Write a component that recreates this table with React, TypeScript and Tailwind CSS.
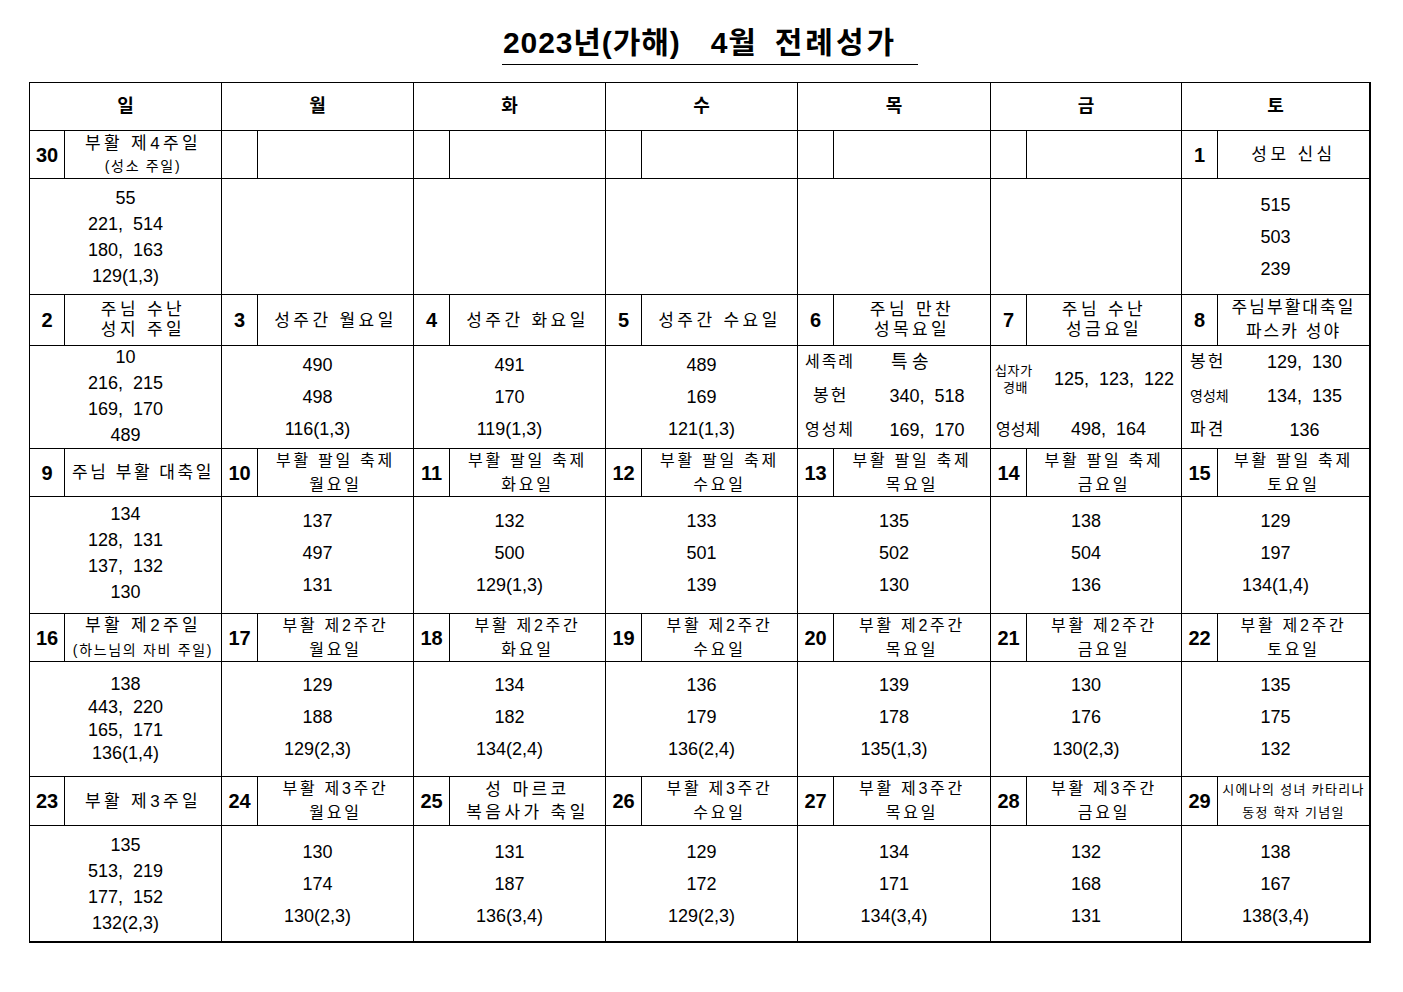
import React from "react"

const font = { fontFamily: "'Liberation Sans', 'Noto Sans CJK KR', sans-serif" }

type Head = { n?: string; lines?: string[]; small?: boolean; lh?: string; size?: string }

const cell = "border-r border-b border-black"

function DayHead({ h, last }: { h: Head; last?: boolean }) {
  return (
    <>
      <div className={`${cell} flex items-center justify-center text-[20px] font-bold`}>{h.n}</div>
      <div
        className={`${cell} ${last ? "border-r-2" : ""} flex flex-col items-center justify-center whitespace-nowrap text-center ${h.size ?? "text-[17px] tracking-[0.2em]"} ${h.lh ?? "leading-[23px]"}`}
      >
        {h.lines?.map((l, i) => (
          <span key={i} className={h.small && i === 1 ? "text-[14px] tracking-[0.12em]" : ""}>
            {l}
          </span>
        ))}
      </div>
    </>
  )
}

function Body({ lines, lh, last, extra }: { lines: string[]; lh: string; last?: boolean; extra?: string }) {
  return (
    <div
      className={`${cell} ${last ? "border-r-2" : ""} col-span-2 flex flex-col items-center justify-center whitespace-pre text-[18px] ${lh} ${extra ?? ""}`}
    >
      {lines.map((l, i) => (
        <span key={i}>{l}</span>
      ))}
    </div>
  )
}

const days = ["일", "월", "화", "수", "목", "금", "토"]
const sub = "text-[16px] tracking-[0.17em]"

export default function App() {
  return (
    <div className="min-h-[992px] w-[1403px] bg-white text-black" style={font}>
      <div className="ml-[502px] mt-[24px] flex h-[41px] w-[416px] items-center border-b border-black pb-[2px] pl-[1px] text-[30px] font-bold leading-[38px] whitespace-nowrap">
        <span className="tracking-[0.03em]">2023년(가해)</span>
        <span className="ml-[30px] tracking-[0.03em]">4월</span>
        <span className="ml-[18px] tracking-[0.1em]">전례성가</span>
      </div>

      <div className="ml-[29px] mt-[17px] grid w-[1342px] grid-cols-[35px_157px_36px_156px_36px_156px_36px_156px_36px_157px_36px_155px_36px_153px] grid-rows-[48px_48px_116px_51px_103px_48px_117px_48px_115px_49px_117px] border-l border-t border-black">
        {/* weekday header */}
        {days.map((d, i) => (
          <div
            key={d}
            className={`${cell} ${i === 6 ? "border-r-2" : ""} col-span-2 flex items-center justify-center text-[18px] font-bold`}
          >
            {d}
          </div>
        ))}

        {/* week 1 */}
        <DayHead h={{ n: "30", lines: ["부활 제4주일", "(성소 주일)"], small: true, lh: "leading-[23px]" }} />
        <DayHead h={{}} />
        <DayHead h={{}} />
        <DayHead h={{}} />
        <DayHead h={{}} />
        <DayHead h={{}} />
        <DayHead h={{ n: "1", lines: ["성모 신심"] }} last />

        <Body lines={["55", "221,  514", "180,  163", "129(1,3)"]} lh="leading-[26px]" />
        <Body lines={[]} lh="" />
        <Body lines={[]} lh="" />
        <Body lines={[]} lh="" />
        <Body lines={[]} lh="" />
        <Body lines={[]} lh="" />
        <Body lines={["515", "503", "239"]} lh="leading-[32px]" last />

        {/* week 2 */}
        <DayHead h={{ n: "2", lines: ["주님 수난", "성지 주일"], lh: "leading-[20px]" }} />
        <DayHead h={{ n: "3", lines: ["성주간 월요일"] }} />
        <DayHead h={{ n: "4", lines: ["성주간 화요일"] }} />
        <DayHead h={{ n: "5", lines: ["성주간 수요일"] }} />
        <DayHead h={{ n: "6", lines: ["주님 만찬", "성목요일"], lh: "leading-[20px]" }} />
        <DayHead h={{ n: "7", lines: ["주님 수난", "성금요일"], lh: "leading-[20px]" }} />
        <DayHead h={{ n: "8", lines: ["주님부활대축일", "파스카 성야"], lh: "leading-[24px]", size: "text-[17px] tracking-[0.12em]" }} last />

        <Body lines={["10", "216,  215", "169,  170", "489"]} lh="leading-[26px]" extra="pb-[3px]" />
        <Body lines={["490", "498", "116(1,3)"]} lh="leading-[32px]" />
        <Body lines={["491", "170", "119(1,3)"]} lh="leading-[32px]" />
        <Body lines={["489", "169", "121(1,3)"]} lh="leading-[32px]" />
        <div className={`${cell} col-span-2 flex flex-col justify-center whitespace-pre pb-[2px] text-[18px] leading-[34px]`}>
          <div className="flex items-center">
            <span className="w-[66px] pl-[7px] text-[16px] tracking-[0.12em]">세족례</span>
            <span className="w-[126px] pr-[30px] text-center tracking-[0.25em]">특송</span>
          </div>
          <div className="flex items-center">
            <span className="w-[66px] pl-[15px] text-[17px] tracking-[0.12em]">봉헌</span>
            <span className="w-[126px] text-center">340,  518</span>
          </div>
          <div className="flex items-center">
            <span className="w-[66px] pl-[7px] text-[16px] tracking-[0.12em]">영성체</span>
            <span className="w-[126px] text-center">169,  170</span>
          </div>
        </div>
        <div className={`${cell} col-span-2 flex flex-col whitespace-pre text-[18px]`}>
          <div className="flex h-[66px] items-center">
            <span className="w-[52px] pl-[4px] text-[13px] leading-[17px] tracking-[0.05em]">
              십자가
              <br />
              <span className="pl-[8px]">경배</span>
            </span>
            <span className="pl-[11px]">125,  123,  122</span>
          </div>
          <div className="flex flex-1 items-center pb-[1px]">
            <span className="w-[52px] pl-[5px] text-[16px]">영성체</span>
            <span className="pl-[28px]">498,  164</span>
          </div>
        </div>
        <div className={`${cell} col-span-2 flex flex-col justify-center whitespace-pre border-r-2 pb-[2px] text-[18px] leading-[34px]`}>
          <div className="flex items-center">
            <span className="w-[72px] pl-[8px] text-[17px] tracking-[0.12em]">봉헌</span>
            <span className="w-[101px] text-center">129,  130</span>
          </div>
          <div className="flex items-center">
            <span className="w-[72px] pl-[8px] text-[14px]">영성체</span>
            <span className="w-[101px] text-center">134,  135</span>
          </div>
          <div className="flex items-center">
            <span className="w-[72px] pl-[8px] text-[17px] tracking-[0.12em]">파견</span>
            <span className="w-[101px] text-center">136</span>
          </div>
        </div>

        {/* week 3 */}
        <DayHead h={{ n: "9", lines: ["주님 부활 대축일"], size: "text-[17px] tracking-[0.15em]" }} />
        <DayHead h={{ n: "10", lines: ["부활 팔일 축제", "월요일"], size: sub, lh: "leading-[24px]" }} />
        <DayHead h={{ n: "11", lines: ["부활 팔일 축제", "화요일"], size: sub, lh: "leading-[24px]" }} />
        <DayHead h={{ n: "12", lines: ["부활 팔일 축제", "수요일"], size: sub, lh: "leading-[24px]" }} />
        <DayHead h={{ n: "13", lines: ["부활 팔일 축제", "목요일"], size: sub, lh: "leading-[24px]" }} />
        <DayHead h={{ n: "14", lines: ["부활 팔일 축제", "금요일"], size: sub, lh: "leading-[24px]" }} />
        <DayHead h={{ n: "15", lines: ["부활 팔일 축제", "토요일"], size: sub, lh: "leading-[24px]" }} last />

        <Body lines={["134", "128,  131", "137,  132", "130"]} lh="leading-[26px]" extra="pb-[5px]" />
        <Body lines={["137", "497", "131"]} lh="leading-[32px]" extra="pb-[5px]" />
        <Body lines={["132", "500", "129(1,3)"]} lh="leading-[32px]" extra="pb-[5px]" />
        <Body lines={["133", "501", "139"]} lh="leading-[32px]" extra="pb-[5px]" />
        <Body lines={["135", "502", "130"]} lh="leading-[32px]" extra="pb-[5px]" />
        <Body lines={["138", "504", "136"]} lh="leading-[32px]" extra="pb-[5px]" />
        <Body lines={["129", "197", "134(1,4)"]} lh="leading-[32px]" extra="pb-[5px]" last />

        {/* week 4 */}
        <DayHead h={{ n: "16", lines: ["부활 제2주일", "(하느님의 자비 주일)"], small: true, lh: "leading-[24px]" }} />
        <DayHead h={{ n: "17", lines: ["부활 제2주간", "월요일"], size: sub, lh: "leading-[24px]" }} />
        <DayHead h={{ n: "18", lines: ["부활 제2주간", "화요일"], size: sub, lh: "leading-[24px]" }} />
        <DayHead h={{ n: "19", lines: ["부활 제2주간", "수요일"], size: sub, lh: "leading-[24px]" }} />
        <DayHead h={{ n: "20", lines: ["부활 제2주간", "목요일"], size: sub, lh: "leading-[24px]" }} />
        <DayHead h={{ n: "21", lines: ["부활 제2주간", "금요일"], size: sub, lh: "leading-[24px]" }} />
        <DayHead h={{ n: "22", lines: ["부활 제2주간", "토요일"], size: sub, lh: "leading-[24px]" }} last />

        <Body lines={["138", "443,  220", "165,  171", "136(1,4)"]} lh="leading-[23px]" />
        <Body lines={["129", "188", "129(2,3)"]} lh="leading-[32px]" extra="pb-[4px]" />
        <Body lines={["134", "182", "134(2,4)"]} lh="leading-[32px]" extra="pb-[4px]" />
        <Body lines={["136", "179", "136(2,4)"]} lh="leading-[32px]" extra="pb-[4px]" />
        <Body lines={["139", "178", "135(1,3)"]} lh="leading-[32px]" extra="pb-[4px]" />
        <Body lines={["130", "176", "130(2,3)"]} lh="leading-[32px]" extra="pb-[4px]" />
        <Body lines={["135", "175", "132"]} lh="leading-[32px]" extra="pb-[4px]" last />

        {/* week 5 */}
        <DayHead h={{ n: "23", lines: ["부활 제3주일"] }} />
        <DayHead h={{ n: "24", lines: ["부활 제3주간", "월요일"], size: sub, lh: "leading-[24px]" }} />
        <DayHead h={{ n: "25", lines: ["성 마르코", "복음사가 축일"], lh: "leading-[23px]" }} />
        <DayHead h={{ n: "26", lines: ["부활 제3주간", "수요일"], size: sub, lh: "leading-[24px]" }} />
        <DayHead h={{ n: "27", lines: ["부활 제3주간", "목요일"], size: sub, lh: "leading-[24px]" }} />
        <DayHead h={{ n: "28", lines: ["부활 제3주간", "금요일"], size: sub, lh: "leading-[24px]" }} />
        <DayHead
          h={{ n: "29", lines: ["시에나의 성녀 카타리나", "동정 학자 기념일"], size: "text-[13px] tracking-[0.1em]", lh: "leading-[23px]" }}
          last
        />

        <Body lines={["135", "513,  219", "177,  152", "132(2,3)"]} lh="leading-[26px]" extra="border-b-2" />
        <Body lines={["130", "174", "130(2,3)"]} lh="leading-[32px]" extra="border-b-2" />
        <Body lines={["131", "187", "136(3,4)"]} lh="leading-[32px]" extra="border-b-2" />
        <Body lines={["129", "172", "129(2,3)"]} lh="leading-[32px]" extra="border-b-2" />
        <Body lines={["134", "171", "134(3,4)"]} lh="leading-[32px]" extra="border-b-2" />
        <Body lines={["132", "168", "131"]} lh="leading-[32px]" extra="border-b-2" />
        <Body lines={["138", "167", "138(3,4)"]} lh="leading-[32px]" extra="border-b-2" last />
      </div>
    </div>
  )
}
